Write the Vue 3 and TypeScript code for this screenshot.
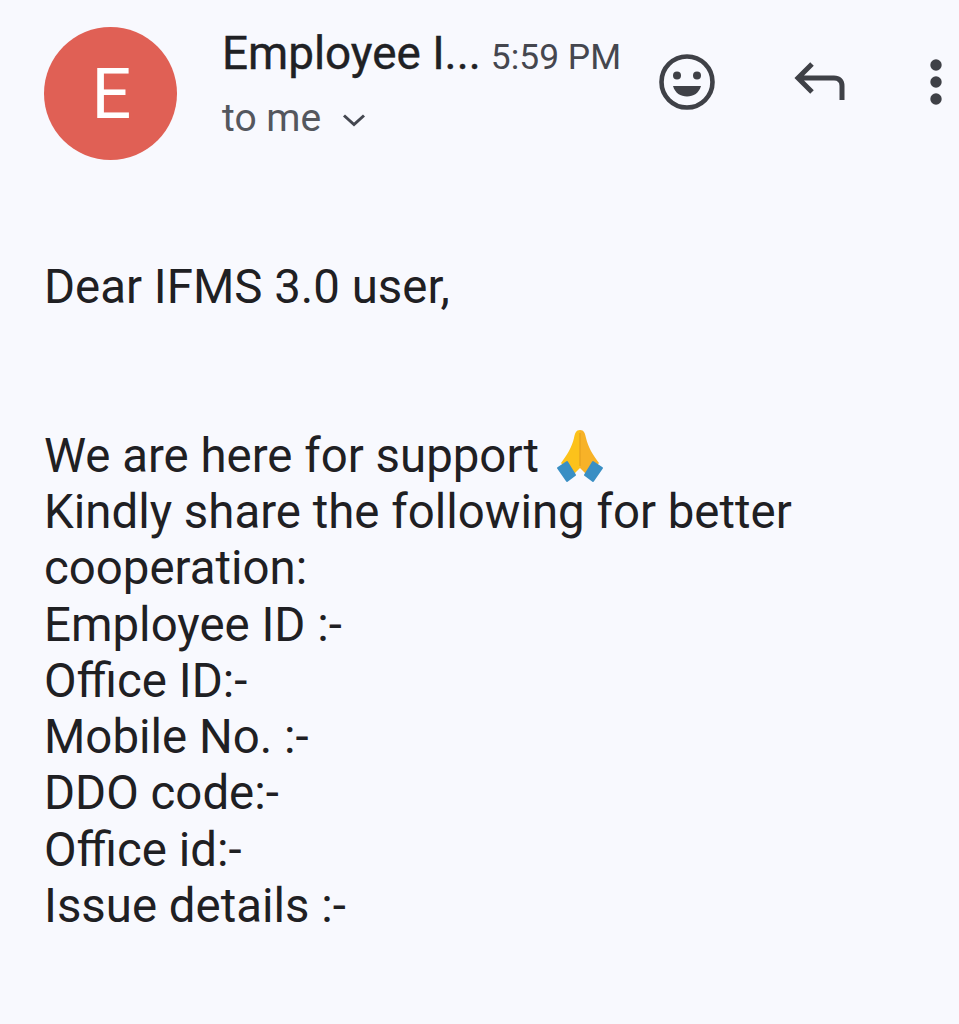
<script setup lang="ts">
const lines = [
  'Kindly share the following for better',
  'cooperation:',
  'Employee ID :-',
  'Office ID:-',
  'Mobile No. :-',
  'DDO code:-',
  'Office id:-',
  'Issue details :-',
]
</script>

<template>
  <div class="page">
    <header class="head">
      <div class="avatar">E</div>
      <div class="meta">
        <div class="top">
          <span class="name">Employee I...</span>
          <span class="time">5:59 PM</span>
        </div>
        <div class="to">
          <span>to me</span>
          <svg class="chev" width="24" height="14" viewBox="0 0 24 14">
            <path d="M2 2.500l10 9 10-9" fill="none" stroke="#444750" stroke-width="3" />
          </svg>
        </div>
      </div>
      <div class="actions">
        <svg width="58" height="58" viewBox="0 0 58 58">
          <circle cx="29" cy="29" r="25.500" fill="none" stroke="#3f4147" stroke-width="4.600" />
          <circle cx="19" cy="22.500" r="4" fill="#3f4147" />
          <circle cx="39" cy="22.500" r="4" fill="#3f4147" />
          <path d="M15 33h28c-2 7-7.500 10.500-14 10.500S17 40 15 33z" fill="#3f4147" />
        </svg>
        <svg class="reply" width="52" height="42" viewBox="0 0 52 42">
          <path d="M18 3L4 17l14 14M4 17h36c5 0 8 3 8 8v14" fill="none" stroke="#3f4147" stroke-width="5" />
        </svg>
        <svg class="more" width="12" height="46" viewBox="0 0 12 46">
          <circle cx="6" cy="6" r="5.700" fill="#3f4147" />
          <circle cx="6" cy="23" r="5.700" fill="#3f4147" />
          <circle cx="6" cy="40" r="5.700" fill="#3f4147" />
        </svg>
      </div>
    </header>

    <main class="body">
      <p class="greet">Dear IFMS 3.0 user,</p>
      <p class="line">
        We are here for support
        <svg class="pray" width="50" height="54" viewBox="0 0 50 54">
          <path d="M25 1C21 1 20 4 19 9 17 18 12 26 6 34l11 13 8-8z" fill="#fcc21b" />
          <path d="M25 1C29 1 30 4 31 9 33 18 38 26 44 34L33 47l-8-8z" fill="#f7b228" />
          <path d="M25 4v33" stroke="#e59f1f" stroke-width="1.200" />
          <path d="M3 39l9-6 8 13-8 6z" fill="#3a8fc4" stroke="#3a8fc4" stroke-width="2" stroke-linejoin="round" />
          <path d="M47 39l-9-6-8 13 8 6z" fill="#3a8fc4" stroke="#3a8fc4" stroke-width="2" stroke-linejoin="round" />
        </svg>
      </p>
      <p v-for="l in lines" :key="l" class="line">{{ l }}</p>
    </main>
  </div>
</template>

<style scoped>
.page {
  width: 959px;
  height: 1024px;
  overflow: hidden;
  background: #f8f9fe;
  color: #1f2023;
  font-family: Roboto, "Liberation Sans", sans-serif;
}
.head {
  display: flex;
  align-items: flex-start;
  padding: 27px 0 0 44px;
}
.avatar {
  width: 133px;
  height: 133px;
  flex: none;
  display: flex;
  align-items: center;
  justify-content: center;
  padding-left: 2px;
  box-sizing: border-box;
  border-radius: 50%;
  background: #e06055;
  color: #fff;
  font-size: 70px;
  font-weight: 400;
}
.meta {
  width: 407px;
  margin-left: 45px;
}
.top {
  display: flex;
  align-items: baseline;
  height: 54px;
}
.name {
  font-size: 45.800px;
  line-height: 54px;
  color: #202124;
  -webkit-text-stroke: 0.4px #202124;
}
.time {
  margin-left: 10px;
  font-size: 35.400px;
  color: #45474f;
}
.to {
  display: flex;
  align-items: center;
  gap: 21px;
  margin-top: 15px;
  font-size: 39px;
  line-height: 44px;
  color: #54575e;
}
.chev {
  margin-top: 4px;
}
.actions {
  display: flex;
  align-items: center;
  margin-top: 26px;
  margin-left: 29px;
}
.reply {
  margin-left: 78px;
}
.more {
  margin-left: 84px;
}
.body {
  padding: 0 44px;
  margin-top: 99px;
  font-size: 47.400px;
  line-height: 56.250px;
}
.body p {
  margin: 0;
}
.greet {
  margin-bottom: 112.500px !important;
}
.line {
  white-space: nowrap;
}
.pray {
  vertical-align: -11px;
  margin-left: 4px;
  margin-top: -20px;
}
</style>
